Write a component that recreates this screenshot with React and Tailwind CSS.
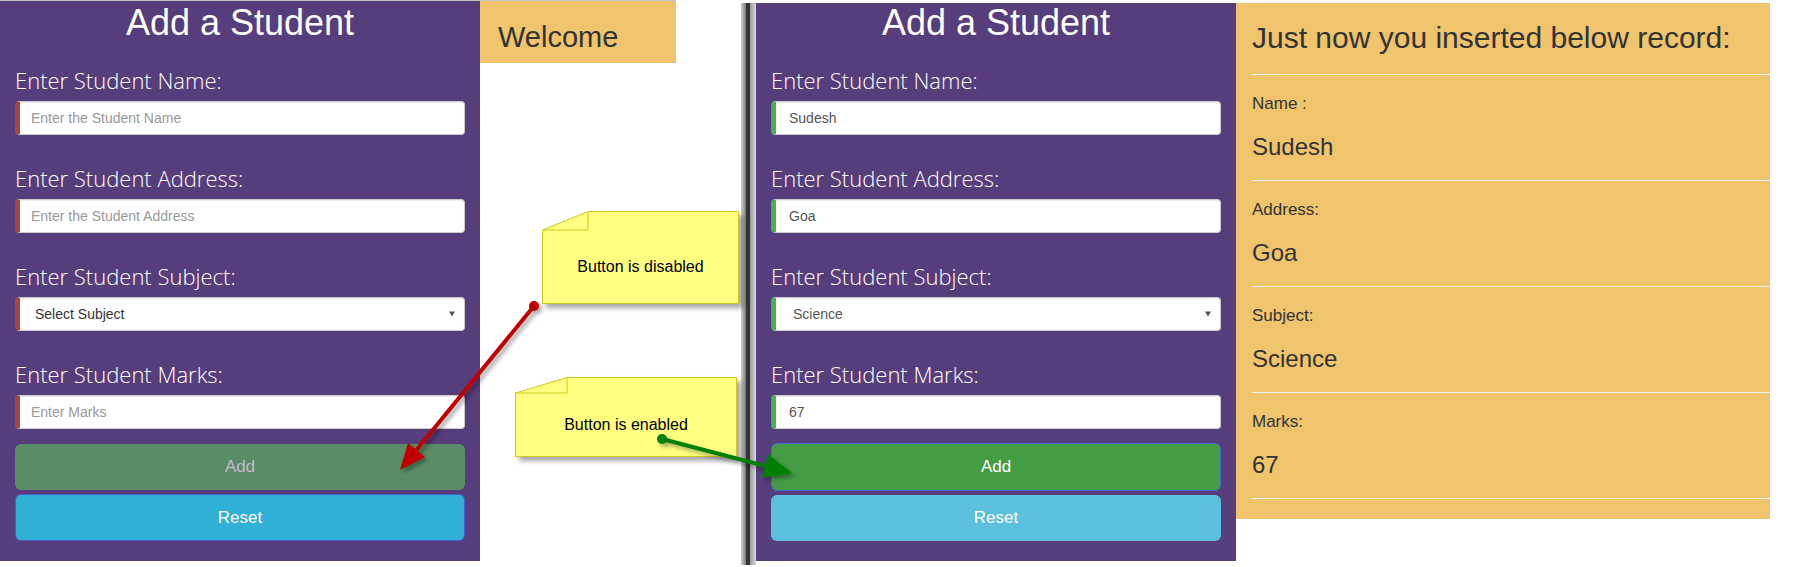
import React from 'react';

const sans = { fontFamily: '"Liberation Sans", Arial, sans-serif' };

const Field = ({ label, children }) => (
  <div>
    <div className="text-white text-[22px] leading-[28px] font-light" style={{ fontFamily: '"Open Sans", sans-serif' }}>
      {label}
    </div>
    <div className="mt-[7px]">{children}</div>
  </div>
);

const TextBox = ({ value, placeholder, ok }) => (
  <div
    className={`h-[34px] w-full rounded-[4px] border border-[#cccccc] border-l-[5px] bg-white flex items-center text-[14px] shadow-[inset_0_1px_1px_rgba(0,0,0,0.075)] ${
      ok ? 'border-l-[#4cae4c] pl-[13px]' : 'border-l-[#a94442] pl-[11px]'
    }`}
    style={sans}
  >
    {value ? <span className="text-[#555555]">{value}</span> : <span className="text-[#999999]">{placeholder}</span>}
  </div>
);

const SelectBox = ({ value, ok }) => (
  <div
    className={`h-[34px] w-full rounded-[4px] border border-[#cccccc] border-l-[5px] bg-white flex items-center justify-between text-[14px] pr-[9px] shadow-[inset_0_1px_1px_rgba(0,0,0,0.075)] ${
      ok ? 'border-l-[#4cae4c] pl-[17px] text-[#555555]' : 'border-l-[#a94442] pl-[15px] text-[#333333]'
    }`}
    style={sans}
  >
    <span>{value}</span>
    <svg width="6" height="6" viewBox="0 0 6 6">
      <polygon points="0,0.5 6,0.5 3,5.5" fill="#555" />
    </svg>
  </div>
);

const StudentForm = ({ filled }) => (
  <div className="flex flex-col gap-[29px]">
    <Field label="Enter Student Name:">
      <TextBox ok={filled} value={filled ? 'Sudesh' : ''} placeholder="Enter the Student Name" />
    </Field>
    <Field label="Enter Student Address:">
      <TextBox ok={filled} value={filled ? 'Goa' : ''} placeholder="Enter the Student Address" />
    </Field>
    <Field label="Enter Student Subject:">
      <SelectBox ok={filled} value={filled ? 'Science' : 'Select Subject'} />
    </Field>
    <Field label="Enter Student Marks:">
      <TextBox ok={filled} value={filled ? '67' : ''} placeholder="Enter Marks" />
    </Field>
  </div>
);

const Record = ({ label, value }) => (
  <div>
    <div className="border-t border-[#eeeeee]" />
    <div className="mt-[19px] text-[17px] leading-[20px]">{label}</div>
    <div className="mt-[19px] text-[24px] leading-[28px]">{value}</div>
    <div className="h-[19px]" />
  </div>
);

const Note = ({ left, top, w, h, fx, fy, text, textTop }) => (
  <div className="absolute" style={{ left, top, width: w, height: h }}>
    <svg width={w} height={h} className="absolute inset-0 overflow-visible">
      <defs>
        <filter id={`ns${left}`} x="-10%" y="-10%" width="130%" height="140%">
          <feDropShadow dx="4" dy="4" stdDeviation="2.5" floodColor="#000" floodOpacity="0.35" />
        </filter>
      </defs>
      <polygon
        points={`${fx},0.5 ${w - 0.5},0.5 ${w - 0.5},${h - 0.5} 0.5,${h - 0.5} 0.5,${fy}`}
        fill="#ffff80"
        stroke="#c9c920"
        strokeWidth="1"
        filter={`url(#ns${left})`}
      />
      <polyline points={`0.5,${fy} ${fx},${fy} ${fx},0.5`} fill="none" stroke="#c9c920" strokeWidth="1" />
    </svg>
    <div className="absolute left-0 right-0 text-center text-black text-[16px] leading-[18px]" style={{ ...sans, top: textTop }}>
      {text}
    </div>
  </div>
);

export default function App() {
  return (
    <div className="relative w-[1804px] h-[567px] bg-white overflow-hidden" style={sans}>
      <div className="flex items-start">
        {/* first screenshot */}
        <div className="flex items-start border-t border-[#c4c4c4]">
          <div className="w-[480px] h-[560px] bg-[#563d7c] pt-[2px] px-[15px]">
            <h2 className="text-white text-[36px] leading-[40px] text-center">Add a Student</h2>
            <div className="mt-[23px]">
              <StudentForm filled={false} />
            </div>
            <button className="mt-[15px] w-full h-[46px] rounded-[6px] bg-[#5cb85c] opacity-65 text-white text-[17px]">
              Add
            </button>
            <button className="mt-[4px] w-full h-[47px] rounded-[6px] bg-[#31b0d5] border border-[#4a5fcf] text-white text-[17px]">
              Reset
            </button>
          </div>
          <div className="w-[196px] h-[62px] bg-[#f0c36d] pt-[20px] pl-[18px]">
            <div className="text-[29px] leading-[32px] text-[#333333]">Welcome</div>
          </div>
        </div>

        {/* divider */}
        <div className="ml-[65px] mt-[3px] flex h-[562px]">
          <div className="w-[5px] bg-gradient-to-r from-[#d0d0d0] to-[#7a7a7a]" />
          <div className="w-[4px] bg-[#333333]" />
          <div className="w-[6px] bg-gradient-to-r from-[#9a9a9a] to-[#d8d8d8]" />
        </div>

        {/* second screenshot */}
        <div className="mt-[3px] flex items-start">
          <div className="w-[480px] h-[558px] bg-[#563d7c] px-[15px]">
            <h2 className="text-white text-[36px] leading-[40px] text-center">Add a Student</h2>
            <div className="mt-[23px]">
              <StudentForm filled />
            </div>
            <button className="mt-[14px] w-full h-[48px] rounded-[6px] bg-[#449d44] border border-[#4a6ad0] text-white text-[17px]">
              Add
            </button>
            <button className="mt-[4px] w-full h-[46px] rounded-[6px] bg-[#5bc0de] text-white text-[17px]">
              Reset
            </button>
          </div>
          <div className="w-[534px] bg-[#f0c36d] pt-[18px] pl-[16px] pb-[20px] text-[#333333]">
            <div className="text-[30px] leading-[34px]">Just now you inserted below record:</div>
            <div className="mt-[19px]">
              <Record label="Name :" value="Sudesh" />
              <Record label="Address:" value="Goa" />
              <Record label="Subject:" value="Science" />
              <Record label="Marks:" value="67" />
              <div className="border-t border-[#eeeeee]" />
            </div>
          </div>
        </div>
      </div>

      {/* callouts */}
      <Note left={542} top={211} w={197} h={93} fx={46} fy={19} text="Button is disabled" textTop={47} />
      <Note left={515} top={377} w={222} h={80} fx={52} fy={16} text="Button is enabled" textTop={39} />

      <svg className="absolute inset-0 pointer-events-none" width="1804" height="567">
        <defs>
          <filter id="arrowShadow" x="-20%" y="-20%" width="150%" height="150%">
            <feDropShadow dx="3" dy="3" stdDeviation="2" floodColor="#000" floodOpacity="0.35" />
          </filter>
        </defs>
        <g filter="url(#arrowShadow)">
          <line x1="534" y1="306" x2="416.5" y2="449.9" stroke="#c00000" strokeWidth="4" />
          <polygon points="400,470 425,456.9 408,442.9" fill="#c00000" />
          <circle cx="534" cy="306" r="5" fill="#c00000" />
        </g>
        <g filter="url(#arrowShadow)">
          <line x1="662" y1="439" x2="764.9" y2="465.9" stroke="#008000" strokeWidth="4" />
          <polygon points="792,473 761.9,477.5 767.9,454.3" fill="#008000" />
          <circle cx="662" cy="439" r="5" fill="#008000" />
        </g>
      </svg>
    </div>
  );
}
